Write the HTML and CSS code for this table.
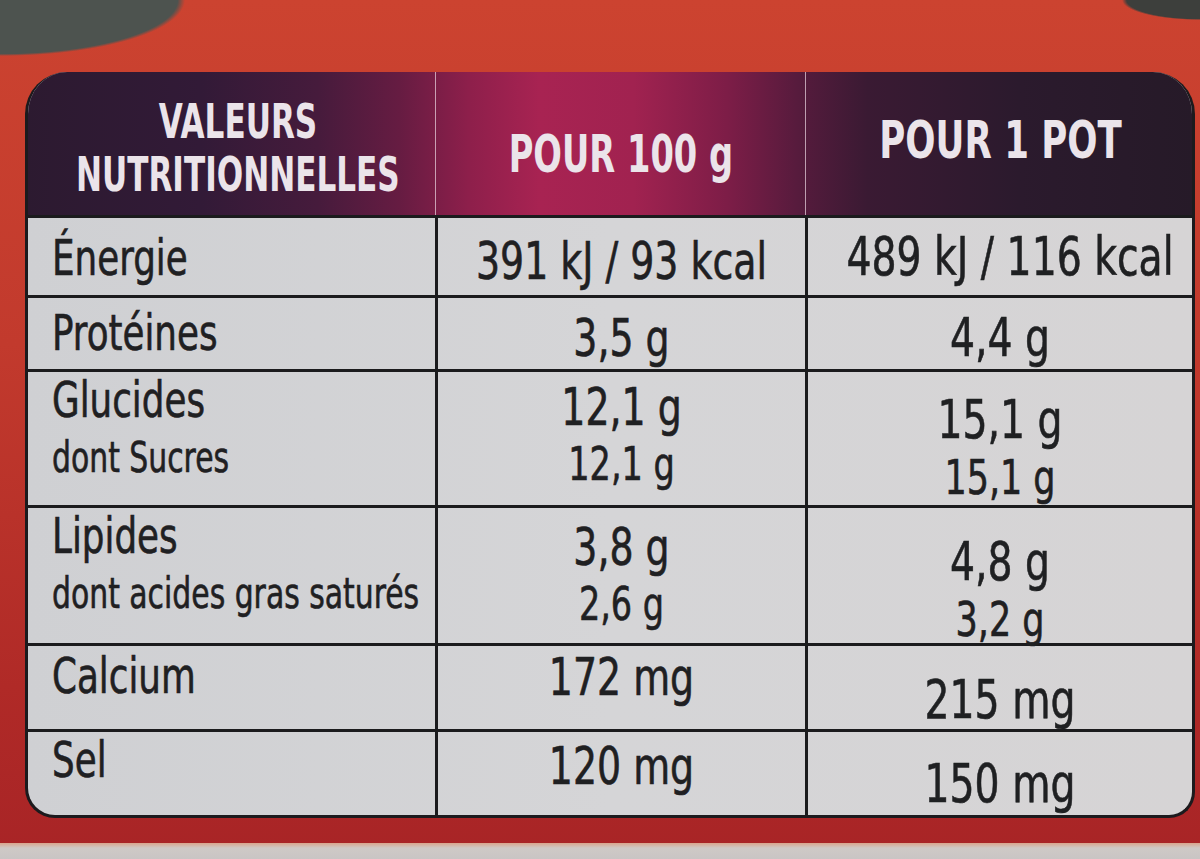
FILE: index.html
```html
<!DOCTYPE html>
<html lang="fr">
<head>
<meta charset="utf-8">
<title>Valeurs nutritionnelles</title>
<link rel="stylesheet" href="styles.css">
</head>
<body>
<div class="page">
  <div class="label-table">
    <div class="head">
      <div class="hcell hcell-name"><span>VALEURS</span><span>NUTRITIONNELLES</span></div>
      <div class="hcell hcell-100"><span>POUR 100 g</span></div>
      <div class="hcell hcell-pot"><span>POUR 1 POT</span></div>
    </div>
    <div class="row r-energie">
      <div class="cell name"><span class="main">Énergie</span></div>
      <div class="cell val"><span class="main">391 kJ / 93 kcal</span></div>
      <div class="cell val"><span class="main">489 kJ / 116 kcal</span></div>
    </div>
    <div class="row r-prot">
      <div class="cell name"><span class="main">Protéines</span></div>
      <div class="cell val"><span class="main">3,5 g</span></div>
      <div class="cell val"><span class="main">4,4 g</span></div>
    </div>
    <div class="row r-gluc">
      <div class="cell name"><span class="main">Glucides</span><span class="sub">dont Sucres</span></div>
      <div class="cell val"><span class="main">12,1 g</span><span class="sub">12,1 g</span></div>
      <div class="cell val"><span class="main">15,1 g</span><span class="sub">15,1 g</span></div>
    </div>
    <div class="row r-lip">
      <div class="cell name"><span class="main">Lipides</span><span class="sub">dont acides gras saturés</span></div>
      <div class="cell val"><span class="main">3,8 g</span><span class="sub">2,6 g</span></div>
      <div class="cell val"><span class="main">4,8 g</span><span class="sub">3,2 g</span></div>
    </div>
    <div class="row r-calc">
      <div class="cell name"><span class="main">Calcium</span></div>
      <div class="cell val"><span class="main">172 mg</span></div>
      <div class="cell val"><span class="main">215 mg</span></div>
    </div>
    <div class="row r-sel">
      <div class="cell name"><span class="main">Sel</span></div>
      <div class="cell val"><span class="main">120 mg</span></div>
      <div class="cell val"><span class="main">150 mg</span></div>
    </div>
  </div>
</div>
</body>
</html>
```

FILE: styles.css
```css
* { box-sizing: border-box; }

html, body {
  margin: 0;
  padding: 0;
}

body {
  width: 1200px;
  height: 859px;
  overflow: hidden;
  font-family: "DejaVu Sans Condensed", "DejaVu Sans", sans-serif;
  background:
    radial-gradient(ellipse 185px 56px at 0 0, #4d534f 96%, rgba(77,83,79,0) 100%),
    radial-gradient(ellipse 78px 20px at 1200px 0, #3d3f3c 94%, rgba(61,63,60,0) 100%),
    linear-gradient(to bottom, rgba(0,0,0,0) 843px, #d9a58d 843px, #cfc9c6 848px, #c9c5c4 859px),
    linear-gradient(to bottom, #cc4330 0%, #c23a2d 40%, #b02a27 80%, #a82426 100%);
}

.page {
  padding: 72px 5px 0 25px;
}

.label-table {
  width: 1170px;
  height: 746px;
  border: 3px solid #1c1a1d;
  border-top: 0;
  border-radius: 42px 42px 26px 30px;
  overflow: hidden;
  background: linear-gradient(to right, #cfd0d3 0%, #d5d5d7 50%, #d6d4d5 100%);
  color: #1f2022;
}

.head {
  display: grid;
  grid-template-columns: 410px 370px 1fr;
  height: 143px;
  margin: 0 -3px;
  background: linear-gradient(to right,
    #2c1a30 0%, #321a37 15%, #461b3c 25%, #661c42 32%,
    #8e1f4b 38%, #a82352 44%, #a12250 52%, #7d1d47 60%,
    #571b3d 66%, #3a1a33 72%, #2b1a2d 85%, #261a28 100%);
  color: #ebe4ea;
  font-weight: bold;
}

.hcell {
  display: flex;
  flex-direction: column;
  align-items: center;
  justify-content: center;
}

.hcell span {
  display: inline-block;
  white-space: nowrap;
  transform: scaleX(0.72);
}

.hcell + .hcell {
  border-left: 1px solid rgba(235, 215, 225, 0.7);
}

.hcell-name {
  font-size: 48px;
  line-height: 53px;
  padding: 8px 0 0 16px;
}

.hcell-name span { transform: scaleX(0.72); }

.hcell-100 {
  font-size: 52px;
  padding-top: 20px;
}

.hcell-pot {
  font-size: 52px;
  padding-bottom: 8px;
}

.hcell-pot span { transform: scaleX(0.76); }

.row {
  display: grid;
  grid-template-columns: 407px 370px 1fr;
  border-top: 3px solid #1b1b1d;
}

.r-energie { height: 80px; }
.r-prot { height: 74px; }
.r-gluc { height: 136px; }
.r-lip { height: 138px; }
.r-calc { height: 86px; }
.r-sel { height: 92px; }

.cell {
  display: flex;
  flex-direction: column;
  justify-content: center;
  -webkit-text-stroke: 0.6px #1f2022;
}

.cell span {
  display: block;
  white-space: nowrap;
}

.cell + .cell {
  border-left: 3px solid #1b1b1d;
}

.name {
  padding-left: 24px;
  padding-top: 4px;
}

.name span {
  transform: scaleX(0.81);
  transform-origin: left center;
}

.name .sub { transform: scaleX(0.79); }

.val {
  padding-top: 8px;
}

.val span {
  text-align: center;
  transform: scaleX(0.81);
  transform-origin: center;
}

.name .main {
  font-size: 49px;
  line-height: 58px;
}

.name .sub {
  font-size: 42px;
  line-height: 56px;
}

.val .main {
  font-size: 52px;
  line-height: 58px;
}

.val .sub {
  font-size: 46px;
  line-height: 56px;
}

.val:last-child .main { font-size: 54px; }
.val:last-child .sub { font-size: 48px; }

.r-energie .val:last-child { padding-top: 0; }
.r-prot .name { padding-top: 0; }

.r-gluc .name { padding-top: 0; padding-bottom: 20px; }
.r-gluc .val:nth-child(2) { padding-top: 0; padding-bottom: 8px; }
.r-gluc .val:last-child { padding-top: 18px; }

.r-lip .name { padding-top: 0; padding-bottom: 28px; }
.r-lip .val:nth-child(2) { padding-top: 0; padding-bottom: 8px; }
.r-lip .val:last-child { padding-top: 22px; }

.r-calc .name { padding-top: 0; padding-bottom: 22px; }
.r-calc .val:nth-child(2) { padding-top: 0; padding-bottom: 22px; }
.r-calc .val:last-child { padding-top: 24px; }

.r-sel .name { padding-top: 0; padding-bottom: 32px; }
.r-sel .val:nth-child(2) { padding-top: 0; padding-bottom: 22px; }
.r-sel .val:last-child { padding-top: 14px; }
```
